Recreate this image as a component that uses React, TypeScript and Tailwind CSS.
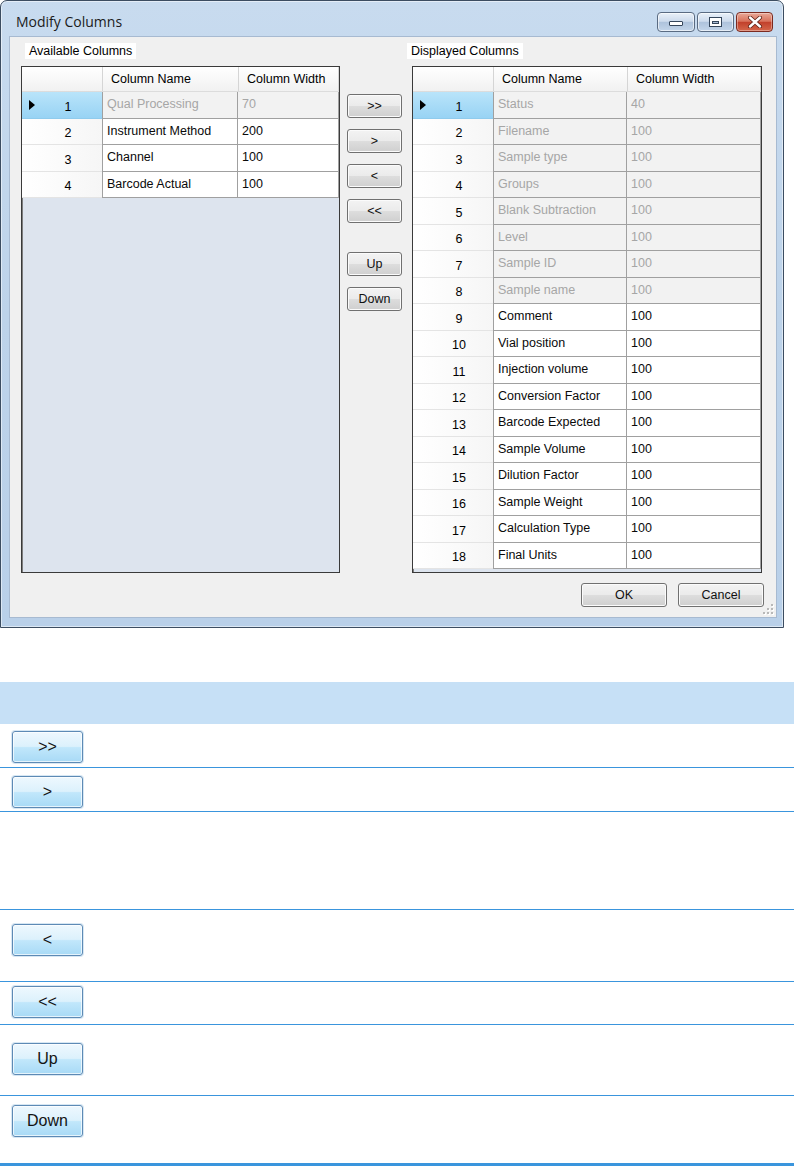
import React from 'react'

type Row = { name: string; width: string; locked?: boolean }

const available: Row[] = [
  { name: 'Qual Processing', width: '70', locked: true },
  { name: 'Instrument Method', width: '200' },
  { name: 'Channel', width: '100' },
  { name: 'Barcode Actual', width: '100' },
]

const displayed: Row[] = [
  { name: 'Status', width: '40', locked: true },
  { name: 'Filename', width: '100', locked: true },
  { name: 'Sample type', width: '100', locked: true },
  { name: 'Groups', width: '100', locked: true },
  { name: 'Blank Subtraction', width: '100', locked: true },
  { name: 'Level', width: '100', locked: true },
  { name: 'Sample ID', width: '100', locked: true },
  { name: 'Sample name', width: '100', locked: true },
  { name: 'Comment', width: '100' },
  { name: 'Vial position', width: '100' },
  { name: 'Injection volume', width: '100' },
  { name: 'Conversion Factor', width: '100' },
  { name: 'Barcode Expected', width: '100' },
  { name: 'Sample Volume', width: '100' },
  { name: 'Dilution Factor', width: '100' },
  { name: 'Sample Weight', width: '100' },
  { name: 'Calculation Type', width: '100' },
  { name: 'Final Units', width: '100' },
]

// classic win7 grey push button
const WinButton = ({ label, className = '' }: { label: string; className?: string }) => (
  <div
    className={`h-[24px] rounded-[3px] border border-[#707070] bg-[linear-gradient(to_bottom,#f3f3f3_0%,#ebebeb_48%,#dddddd_52%,#cfcfcf_100%)] shadow-[inset_0_0_0_1px_#fbfbfb] flex items-center justify-center text-[12.5px] text-[#111] ${className}`}
  >
    {label}
  </div>
)

const GridView = ({
  rows,
  boxCls,
  nameCls,
  widthCls,
}: {
  rows: Row[]
  boxCls: string
  nameCls: string
  widthCls: string
}) => (
  <div className={`h-[507px] border border-[#3a3a3a] bg-[#dde4ee] shadow-[inset_1px_1px_0_#7d7d7d] overflow-hidden ${boxCls}`}>
    {/* header */}
    <div className="flex h-[25px] bg-gradient-to-b from-white to-[#f1f1f1] border-b border-[#dcdcdc]">
      <div className="w-[80px] shrink-0" />
      <div className={`shrink-0 border-l border-[#d5d5d5] pl-[8px] flex items-center text-[12.5px] ${nameCls}`}>
        Column Name
      </div>
      <div className={`shrink-0 border-l border-r border-[#d5d5d5] pl-[8px] flex items-center text-[12.5px] ${widthCls}`}>
        Column Width
      </div>
    </div>
    {rows.map((r, i) => {
      const sel = i === 0
      const cell = r.locked ? 'bg-[#f2f2f2] text-[#a6a6a6]' : 'bg-white text-[#0a0a0a]'
      return (
        <div key={r.name} className="flex h-[26.5px]">
          <div
            className={`relative w-[80px] shrink-0 flex items-center justify-center pl-[12px] pt-[5px] text-[12.5px] border-b ${
              sel
                ? 'bg-gradient-to-b from-[#b9e4fa] to-[#98d3f4] border-[#8fcbed]'
                : 'bg-gradient-to-r from-white to-[#f6f6f6] border-[#e4e4e4]'
            }`}
          >
            {sel && (
              <span className="absolute left-[7px] top-[8px] w-0 h-0 border-y-[5px] border-y-transparent border-l-[6px] border-l-black" />
            )}
            {i + 1}
          </div>
          <div className={`shrink-0 border-l border-r border-b border-[#a0a0a0] pl-[4px] flex items-center text-[12.5px] whitespace-nowrap ${cell} ${nameCls}`}>
            {r.name}
          </div>
          <div className={`shrink-0 border-r border-b border-[#a0a0a0] pl-[4px] flex items-center text-[12.5px] ${cell} ${widthCls}`}>
            {r.width}
          </div>
        </div>
      )
    })}
  </div>
)

const TitleButtons = () => (
  <div className="ml-auto mr-[10px] mt-[11px] flex gap-[2px]">
    <div className="w-[38px] h-[20px] rounded-[4px] border border-[#5a6b82] bg-[linear-gradient(to_bottom,#e9f0f9_0%,#cddbec_46%,#aec3dc_52%,#c3d5ea_100%)] shadow-[inset_0_0_0_1px_rgba(255,255,255,0.6)] flex justify-center">
      <div className="mt-[8px] w-[14px] h-[5px] rounded-[1px] border border-[#35465b] bg-white" />
    </div>
    <div className="w-[37px] h-[20px] rounded-[4px] border border-[#5a6b82] bg-[linear-gradient(to_bottom,#e9f0f9_0%,#cddbec_46%,#aec3dc_52%,#c3d5ea_100%)] shadow-[inset_0_0_0_1px_rgba(255,255,255,0.6)] flex items-center justify-center">
      <div className="w-[13px] h-[10px] border border-[#35465b] bg-white flex items-center justify-center">
        <div className="w-[7px] h-[3px] border border-[#35465b] bg-[#a9bdd5]" />
      </div>
    </div>
    <div className="w-[37px] h-[20px] rounded-[4px] border border-[#7b2a20] bg-[linear-gradient(to_bottom,#e9a898_0%,#d8725c_46%,#c2412c_52%,#d4674b_100%)] shadow-[inset_0_0_0_1px_rgba(255,255,255,0.35)] flex items-center justify-center">
      <svg width="16" height="12" viewBox="0 0 16 12">
        <path d="M3 1.5 L13 10.5 M13 1.5 L3 10.5" stroke="#5b1e14" strokeWidth="4" strokeLinecap="round" />
        <path d="M3 1.5 L13 10.5 M13 1.5 L3 10.5" stroke="#ffffff" strokeWidth="2.4" strokeLinecap="round" />
      </svg>
    </div>
  </div>
)

const Dialog = () => (
  <div className="w-[784px] h-[628px] rounded-t-[7px] border border-[#3c4d61] bg-gradient-to-b from-[#c8dbef] via-[#bdd3ea] to-[#b9d0e9] shadow-[inset_0_0_0_1px_rgba(255,255,255,0.5)] flex flex-col">
    <div className="h-[35px] flex items-start">
      <span className="ml-[15px] mt-[11px] text-[14px] leading-[20px] font-['Open_Sans',sans-serif] text-[#1b1b1b]">
        Modify Columns
      </span>
      <TitleButtons />
    </div>
    <div className="relative ml-[8px] w-[768px] h-[582px] bg-[#f0f0f0] border border-[#a7bad1] flex flex-col">
      <div className="flex pl-[11px] pt-[6px]">
        <div className="flex flex-col w-[319px]">
          <div className="ml-[4px] self-start h-[16px] px-[4px] bg-white text-[12.5px] leading-[16px]">Available Columns</div>
          <div className="h-[7px]" />
          <GridView rows={available} boxCls="w-[319px]" nameCls="w-[136px]" widthCls="w-[101px]" />
        </div>
        <div className="ml-[7px] w-[55px] pt-[51px] flex flex-col">
          <WinButton label=">>" className="w-[55px]" />
          <WinButton label=">" className="w-[55px] mt-[11px]" />
          <WinButton label="<" className="w-[55px] mt-[11px]" />
          <WinButton label="<<" className="w-[55px] mt-[11px]" />
          <WinButton label="Up" className="w-[55px] mt-[29px]" />
          <WinButton label="Down" className="w-[55px] mt-[11px]" />
        </div>
        <div className="ml-[10px] flex flex-col w-[350px]">
          <div className="-ml-[5px] self-start h-[16px] px-[4px] bg-white text-[12.5px] leading-[16px]">Displayed Columns</div>
          <div className="h-[7px]" />
          <GridView rows={displayed} boxCls="w-[350px]" nameCls="w-[134px]" widthCls="w-[134px]" />
        </div>
      </div>
      <div className="flex justify-end gap-[11px] pr-[12px] mt-[10px]">
        <WinButton label="OK" className="w-[86px]" />
        <WinButton label="Cancel" className="w-[86px]" />
      </div>
      {/* size grip */}
      <svg className="absolute right-[2px] bottom-[2px]" width="11" height="11" viewBox="0 0 11 11">
        {[
          [8, 0],
          [8, 4],
          [4, 4],
          [8, 8],
          [4, 8],
          [0, 8],
        ].map(([x, y]) => (
          <g key={`${x}-${y}`}>
            <rect x={x + 1} y={y + 1} width="2" height="2" fill="#ffffff" />
            <rect x={x} y={y} width="2" height="2" fill="#b8b8b8" />
          </g>
        ))}
      </svg>
    </div>
  </div>
)

const BlueButton = ({ label }: { label: string }) => (
  <div className="ml-[12px] w-[71px] h-[32px] rounded-[3px] border border-[#5d8ab5] bg-[linear-gradient(to_bottom,#eef8fe_0%,#dcf1fc_48%,#c1e7fb_52%,#a8daf6_100%)] shadow-[inset_0_0_0_1px_rgba(255,255,255,0.7),0_0_0_1px_#d7e7f3] flex items-center justify-center text-[16px] text-[#141414]">
    {label}
  </div>
)

// legend rows underneath the screenshot
const legend: { label?: string; h: string; pt: string }[] = [
  { label: '>>', h: 'h-[44px]', pt: 'pt-[7px]' },
  { label: '>', h: 'h-[44px]', pt: 'pt-[8px]' },
  { h: 'h-[98px]', pt: 'pt-0' },
  { label: '<', h: 'h-[72px]', pt: 'pt-[14px]' },
  { label: '<<', h: 'h-[43px]', pt: 'pt-[4px]' },
  { label: 'Up', h: 'h-[71px]', pt: 'pt-[18px]' },
  { label: 'Down', h: 'h-[70px]', pt: 'pt-[9px]' },
]

export default function App() {
  return (
    <div className="w-[794px] h-[1169px] bg-white overflow-hidden font-['Liberation_Sans',Arial,sans-serif] text-black">
      <Dialog />
      <div className="h-[54px]" />
      <div className="h-[42px] bg-[#c6e0f6]" />
      {legend.map((row, i) => (
        <div
          key={i}
          className={`${row.h} ${row.pt} ${i === legend.length - 1 ? 'border-b-[3px] border-[#3a95dd]' : 'border-b border-[#3a95dd]'}`}
        >
          {row.label && <BlueButton label={row.label} />}
        </div>
      ))}
    </div>
  )
}
